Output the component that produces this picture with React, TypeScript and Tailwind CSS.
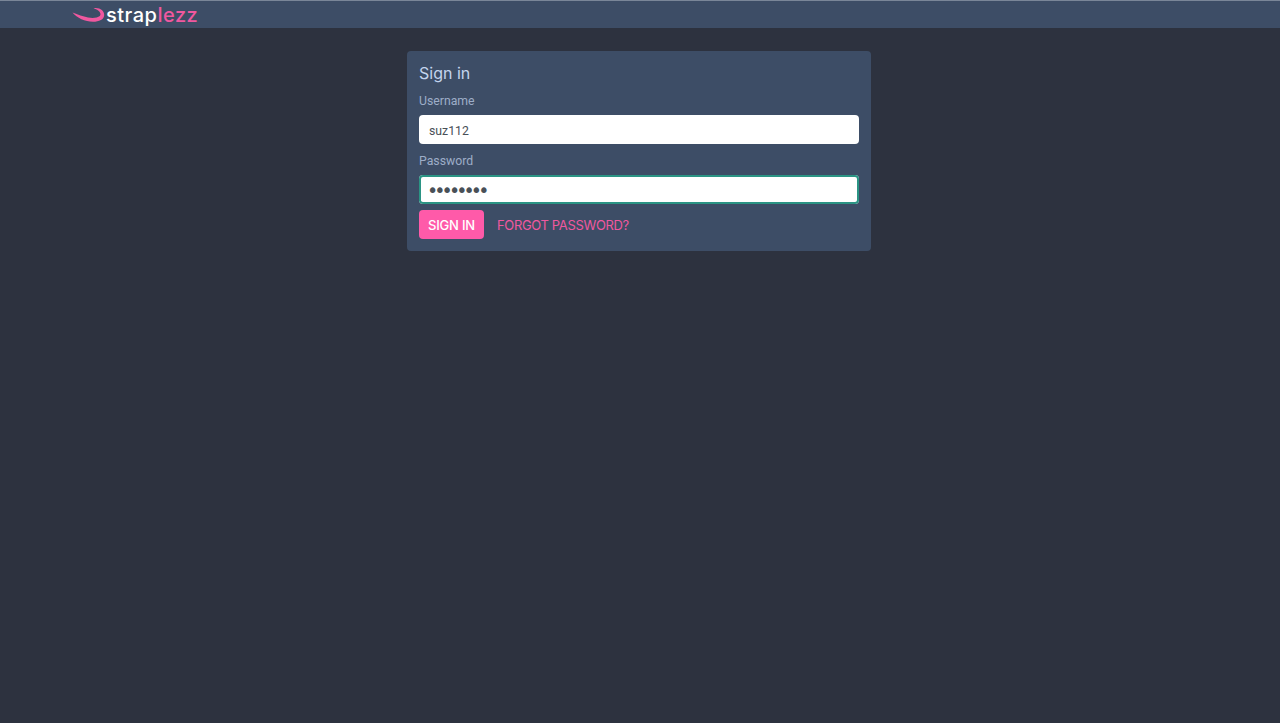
import React from 'react';

const Logo = () => (
  <div className="flex items-center">
    <svg width="34" height="18" viewBox="0 0 34 18" className="shrink-0">
      <path d="M0.5 6.5 C6 8.5 11 10.5 16 11.5 C20.5 12.3 25.5 12 27.8 10 C30 7.5 27 3.8 21.5 2.2 C27.5 1 32.2 4.5 32.2 9 C32.2 13.5 27 15.8 21 15.8 C13 15.8 5 12 0.5 6.5 Z" fill="#f0589f" />
    </svg>
    <span className="text-[20px] leading-none font-medium tracking-[0.5px] text-white font-['Inter',sans-serif]">
      strap<span className="text-[#f0589f]">lezz</span>
    </span>
  </div>
);

const inputClass = "block w-full h-[29px] rounded bg-white text-[#495057] outline-none";

const labelClass = "block text-[12.25px] leading-[18px] text-[#9dadc8] font-['Roboto',sans-serif]";

export default function App() {
  return (
    <div className="min-h-screen bg-[#2d323f]">
      <header className="h-[28px] border-t border-[#7a8698] bg-[#3d4d66] pl-[72px] flex items-center">
        <Logo />
      </header>

      <main className="flex justify-center pt-[23px]">
        <div className="w-[464px] rounded bg-[#3d4d66] p-3 mr-[2px]">
          <h1 className="text-[16px] leading-[20px] text-[#c3d4ee] font-['Inter',sans-serif]">Sign in</h1>

          <label className={labelClass + " mt-[9px] mb-[5px]"}>Username</label>
          <input className={inputClass + " px-[10px] pt-[2px] text-[12.25px] font-['Roboto',sans-serif]"} defaultValue="suz112" readOnly />

          <label className={labelClass + " mt-[8px] mb-[5px]"}>Password</label>
          <input
            type="password"
            className={inputClass + " px-[8px] text-[19px] tracking-[-3.9px] font-['DejaVu_Sans',sans-serif] ring-2 ring-inset ring-[#2b9484]"}
            defaultValue="password"
            readOnly
          />

          <div className="mt-[6px] flex items-center">
            <button className="h-[29px] w-[65px] pt-[2px] rounded bg-[#ff5aa9] text-[13px] tracking-[-0.2px] font-medium text-white font-['Inter',sans-serif]">
              SIGN IN
            </button>
            <a className="ml-[13px] mt-[2px] text-[13px] tracking-[-0.35px] text-[#f0589f] font-['Inter',sans-serif]">FORGOT PASSWORD?</a>
          </div>
        </div>
      </main>
    </div>
  );
}
